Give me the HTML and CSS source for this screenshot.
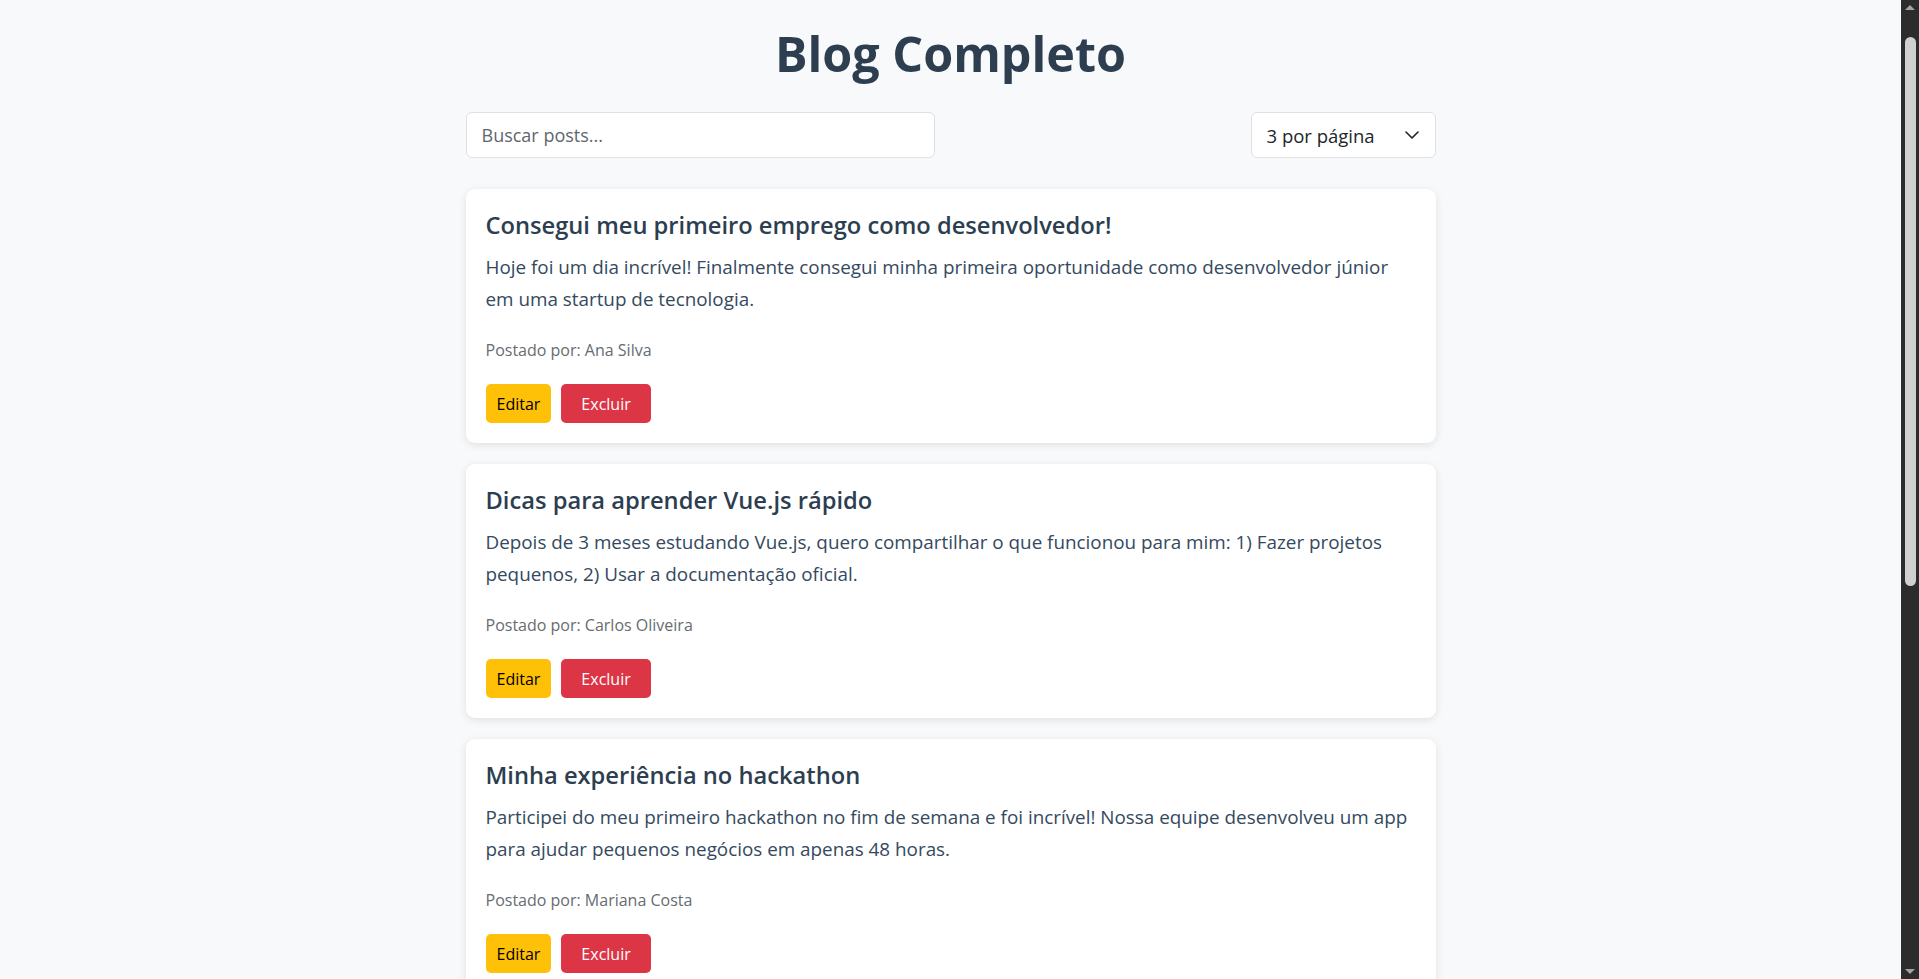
FILE: index.html
```html
<!DOCTYPE html>
<html lang="pt-BR">
<head>
<meta charset="utf-8">
<title>Blog Completo</title>
<link rel="stylesheet" href="styles.css">
</head>
<body>
<div class="app">
  <h1 class="page-title">Blog Completo</h1>

  <div class="toolbar">
    <input class="search" type="text" placeholder="Buscar posts...">
    <div class="select-wrap">
      <select class="per-page">
        <option selected>3 por página</option>
        <option>5 por página</option>
        <option>10 por página</option>
      </select>
      <svg class="chevron" width="14" height="8" viewBox="0 0 14 8" aria-hidden="true">
        <path d="M1 1 L7 7 L13 1" fill="none" stroke="#212529" stroke-width="1.6" stroke-linecap="round" stroke-linejoin="round"/>
      </svg>
    </div>
  </div>

  <div class="posts">
    <article class="card">
      <h3 class="card-title">Consegui meu primeiro emprego como desenvolvedor!</h3>
      <p class="card-body">Hoje foi um dia incrível! Finalmente consegui minha primeira oportunidade como desenvolvedor júnior em uma startup de tecnologia.</p>
      <p class="card-meta">Postado por: Ana Silva</p>
      <div class="actions">
        <button class="btn btn-edit">Editar</button>
        <button class="btn btn-delete">Excluir</button>
      </div>
    </article>

    <article class="card">
      <h3 class="card-title">Dicas para aprender Vue.js rápido</h3>
      <p class="card-body">Depois de 3 meses estudando Vue.js, quero compartilhar o que funcionou para mim: 1) Fazer projetos pequenos, 2) Usar a documentação oficial.</p>
      <p class="card-meta">Postado por: Carlos Oliveira</p>
      <div class="actions">
        <button class="btn btn-edit">Editar</button>
        <button class="btn btn-delete">Excluir</button>
      </div>
    </article>

    <article class="card">
      <h3 class="card-title">Minha experiência no hackathon</h3>
      <p class="card-body">Participei do meu primeiro hackathon no fim de semana e foi incrível! Nossa equipe desenvolveu um app para ajudar pequenos negócios em apenas 48 horas.</p>
      <p class="card-meta">Postado por: Mariana Costa</p>
      <div class="actions">
        <button class="btn btn-edit">Editar</button>
        <button class="btn btn-delete">Excluir</button>
      </div>
    </article>
  </div>

  <nav class="pagination">
    <button class="page-btn" disabled>Anterior</button>
    <span class="page-info">Página 1 de 2</span>
    <button class="page-btn">Próxima</button>
  </nav>

  <section class="new-post">
    <h2 class="section-title">Novo Post</h2>
    <input class="field" type="text" placeholder="Título">
    <textarea class="field area" placeholder="Conteúdo"></textarea>
    <input class="field" type="text" placeholder="Autor">
    <button class="btn btn-primary">Publicar</button>
  </section>
</div>

<div class="fake-scrollbar" aria-hidden="true">
  <svg class="sb-arrow sb-up" width="18" height="14" viewBox="0 0 18 14">
    <path d="M4 10 L9 5 L14 10 Z" fill="#a3a3a3"/>
  </svg>
  <div class="sb-thumb"></div>
  <svg class="sb-arrow sb-down" width="18" height="14" viewBox="0 0 18 14">
    <path d="M4 4 L9 9 L14 4 Z" fill="#a3a3a3"/>
  </svg>
</div>
</body>
</html>
```
FILE: styles.css
```css
html {
  background: #f8f9fa;
}
body {
  margin: 0;
  padding-right: 18px;
  background: #f8f9fa;
  font-family: "Open Sans", "Noto Sans", sans-serif;
  color: #2c3e50;
}
.app {
  max-width: 970px;
  margin: 0 auto;
  padding: 21px 0 60px;
}
.page-title {
  margin: 0 0 26px;
  font-size: 48.5px;
  font-weight: 700;
  line-height: 65px;
  text-align: center;
  color: #2c3e50;
}
.toolbar {
  display: flex;
  justify-content: space-between;
  align-items: center;
  margin-bottom: 31px;
}
.search {
  box-sizing: border-box;
  width: 469px;
  height: 46px;
  padding: 0 15px;
  border: 1px solid #dde1e6;
  border-radius: 6px;
  background: #fff;
  font-family: inherit;
  font-size: 18px;
  color: #2c3e50;
  outline: none;
}
.search::placeholder {
  color: #5f666d;
}
.select-wrap {
  position: relative;
  width: 185px;
}
.per-page {
  box-sizing: border-box;
  width: 100%;
  height: 46px;
  padding: 0 40px 0 15px;
  border: 1px solid #dde1e6;
  border-radius: 6px;
  background: #fff;
  font-family: inherit;
  font-size: 18.5px;
  color: #212529;
  appearance: none;
  -webkit-appearance: none;
  outline: none;
}
.chevron {
  position: absolute;
  right: 17px;
  top: 19px;
  pointer-events: none;
}
.posts {
  display: flex;
  flex-direction: column;
  gap: 21px;
}
.card {
  background: #fff;
  border-radius: 9px;
  padding: 20px;
  box-shadow: 0 2px 8px rgba(0, 0, 0, 0.1);
}
.card-title {
  margin: 0 0 10px;
  font-size: 23.7px;
  font-weight: 600;
  line-height: 32px;
  color: #2c3e50;
}
.card-body {
  margin: 0;
  font-size: 18.85px;
  line-height: 32px;
  color: #34495e;
}
.card-meta {
  margin: 25px 0 24px;
  font-size: 16px;
  line-height: 20px;
  color: #666c72;
}
.actions {
  display: flex;
  gap: 10px;
}
.btn {
  height: 39px;
  border: none;
  border-radius: 5px;
  font-family: inherit;
  font-size: 16px;
  cursor: pointer;
}
.btn-edit {
  padding: 0 11px;
  background: #ffc107;
  color: #000;
}
.btn-delete {
  padding: 0 20px;
  background: #dc3545;
  color: #fff;
}
.btn-primary {
  padding: 0 20px;
  background: #42b983;
  color: #fff;
}
.pagination {
  display: flex;
  justify-content: center;
  align-items: center;
  gap: 16px;
  margin: 30px 0;
}
.page-btn {
  height: 38px;
  padding: 0 16px;
  border: 1px solid #dde1e6;
  border-radius: 6px;
  background: #fff;
  font-family: inherit;
  font-size: 15px;
  color: #2c3e50;
}
.page-btn:disabled {
  color: #aab;
}
.page-info {
  font-size: 15px;
}
.new-post {
  display: flex;
  flex-direction: column;
  gap: 14px;
  padding: 20px;
  background: #fff;
  border-radius: 9px;
  box-shadow: 0 2px 8px rgba(0, 0, 0, 0.1);
}
.section-title {
  margin: 0;
  font-size: 24px;
  font-weight: 600;
}
.field {
  box-sizing: border-box;
  width: 100%;
  height: 44px;
  padding: 0 15px;
  border: 1px solid #dde1e6;
  border-radius: 6px;
  font-family: inherit;
  font-size: 15.5px;
}
.area {
  height: 120px;
  padding-top: 12px;
  resize: vertical;
}
.new-post .btn-primary {
  align-self: flex-start;
}

/* simulated browser scrollbar (dark theme) */
.fake-scrollbar {
  position: fixed;
  top: 0;
  right: 0;
  bottom: 0;
  width: 18px;
  background: #2c2c2c;
}
.sb-arrow {
  position: absolute;
  left: 0;
  display: block;
}
.sb-up {
  top: 0;
}
.sb-down {
  bottom: 0;
}
.sb-thumb {
  position: absolute;
  top: 37px;
  left: 4px;
  width: 11px;
  height: 549px;
  border-radius: 6px;
  background: #d0d0d0;
}
```
